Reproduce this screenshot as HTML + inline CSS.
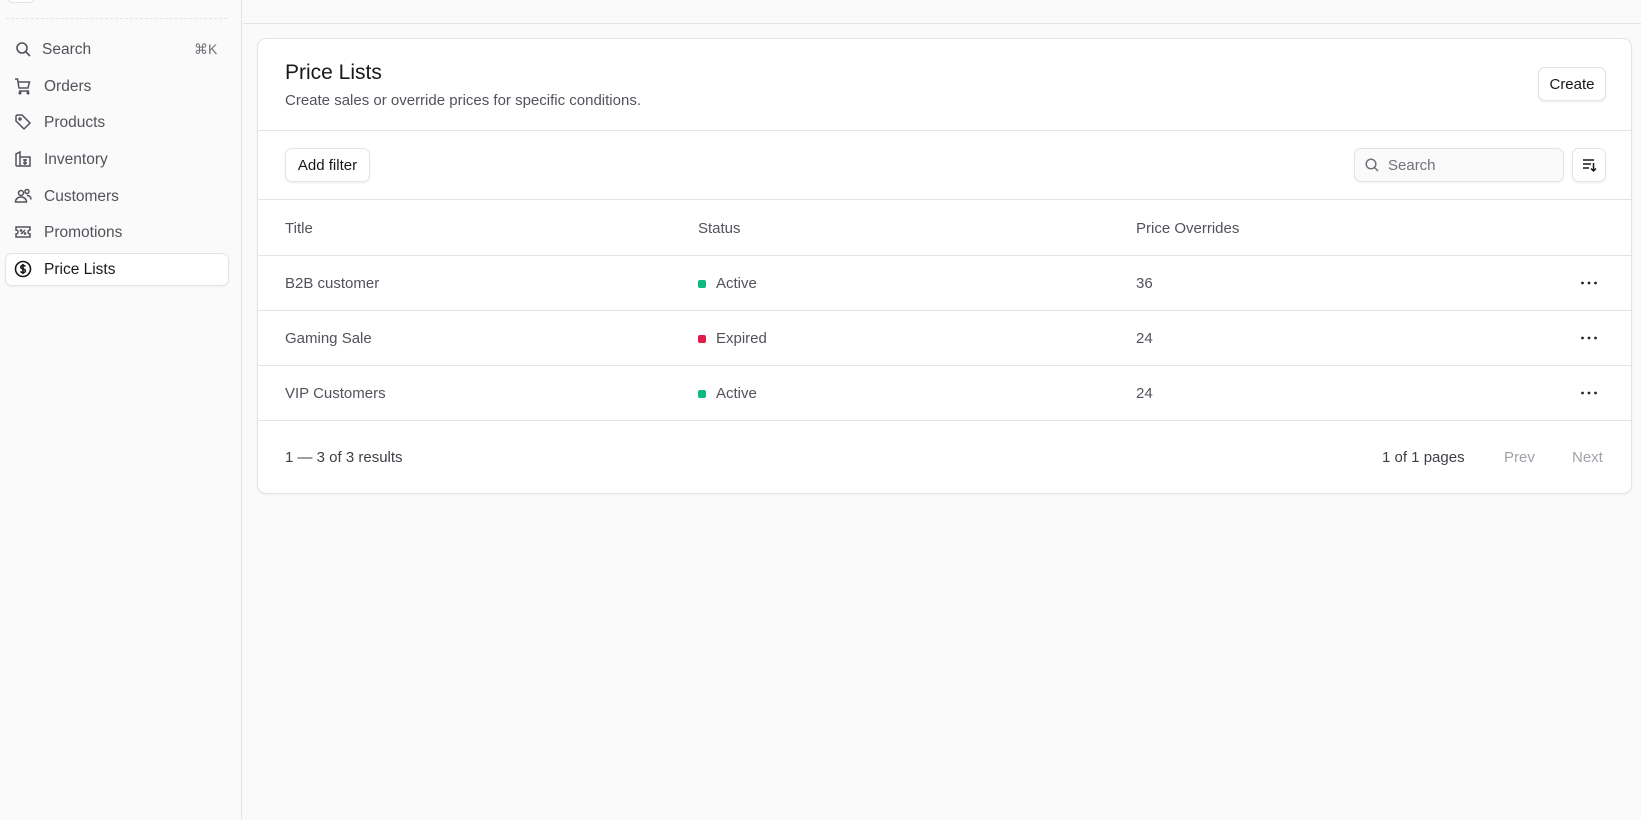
<!DOCTYPE html>
<html><head><style>
*{box-sizing:border-box;margin:0;padding:0}
body{width:1641px;height:820px;background:#fafafa;font-family:"Liberation Sans",sans-serif;color:#18181b;position:relative;overflow:hidden;font-size:15px}
.side{position:absolute;left:0;top:0;width:242px;height:820px;background:#fafafa;border-right:1px solid #e4e4e7}
.dots{position:absolute;left:6px;right:14px;top:18px;border-top:1px dashed #e4e4e7}
.nav{position:absolute;left:5px;width:224px;height:33px;display:flex;align-items:center;color:#52525b;font-size:15.5px}
.nav svg{position:absolute;left:9px;top:7px;width:18px;height:18px}
.nav span{position:absolute;left:39px;top:8px}
.nav.act{background:#fff;border:1px solid #e4e4e7;border-radius:7px;color:#18181b;box-shadow:0 1px 2px rgba(0,0,0,.05)}
.top{position:absolute;left:243px;right:0;top:0;height:24px;border-bottom:1px solid #e4e4e7}
.card{position:absolute;left:257px;top:38px;width:1375px;height:456px;background:#fff;border:1px solid #e4e4e7;border-radius:9px;box-shadow:0 1px 2px rgba(0,0,0,.05)}
.ab{position:absolute}
.btn{position:absolute;background:#fff;border:1px solid #e4e4e7;border-radius:7px;box-shadow:0 1px 2px rgba(0,0,0,.08);display:flex;align-items:center;justify-content:center;font-size:15px;color:#18181b}
.hr{position:absolute;left:0;right:0;border-top:1px solid #e4e4e7}
.row{position:absolute;left:0;right:0;height:20px;color:#52525b;font-size:15px}
.row div{position:absolute;top:0}
.row div.dot{width:8px;height:8px;border-radius:2px;top:5px}
.row div.more{top:5px;line-height:0}
</style></head><body>
<div class="side">
<div style="position:absolute;left:7px;top:-20px;width:28px;height:23px;border:1px solid #e4e4e7;border-radius:6px;background:#fff"></div>
<div class="dots"></div>
<div class="nav" style="top:33px"><svg viewBox="0 0 18 18" fill="none" stroke="#52525b" stroke-width="1.6"><circle cx="8" cy="8" r="5"/><path d="M12 12l4 4"/></svg><span style="left:37px">Search</span><span style="left:189px;color:#71717a;font-size:14px">⌘K</span></div>
<div class="nav" style="top:70px"><svg viewBox="0 0 18 18" fill="none" stroke="#52525b" stroke-width="1.5"><path d="M1 2h2.5l1.5 9h9l1.5-6H4"/><path d="M5 14h10"/><circle cx="6" cy="16" r=".8"/><circle cx="14" cy="16" r=".8"/></svg><span>Orders</span></div>
<div class="nav" style="top:106px"><svg viewBox="0 0 18 18" fill="none" stroke="#52525b" stroke-width="1.5"><path d="M2 3v5l8 8 6-6-8-8H3z"/><circle cx="6" cy="6" r="1"/></svg><span>Products</span></div>
<div class="nav" style="top:143px"><svg viewBox="0 0 18 18" fill="none" stroke="#52525b" stroke-width="1.5"><path d="M2 16V4l4-2v14M6 7h10v9H2M9 10h4M9 13h4M11 9v6"/></svg><span>Inventory</span></div>
<div class="nav" style="top:180px"><svg viewBox="0 0 18 18" fill="none" stroke="#52525b" stroke-width="1.5"><circle cx="7" cy="6" r="2.5"/><circle cx="13" cy="4.5" r="2"/><path d="M1.5 15c0-3 2.5-5 5.5-5s5.5 2 5.5 5zM13 8.5c2.5 0 4 1.5 4 4"/></svg><span>Customers</span></div>
<div class="nav" style="top:216px"><svg viewBox="0 0 18 18" fill="none" stroke="#52525b" stroke-width="1.5"><path d="M2 4h14v3a2 2 0 000 4v3H2v-3a2 2 0 000-4z"/><path d="M7 11l4-4"/><circle cx="7" cy="7.5" r=".6"/><circle cx="11" cy="10.5" r=".6"/></svg><span>Promotions</span></div>
<div class="nav act" style="top:253px"><svg viewBox="0 0 18 18" fill="none" stroke="#18181b" stroke-width="1.6" style="left:8px;top:6px"><circle cx="9" cy="9" r="7.5"/><path d="M11.3 6.5c-.5-.8-1.300-1.1-2.3-1.1-1.3 0-2.2.7-2.2 1.7 0 2.4 4.6 1.2 4.6 3.8 0 1-1 1.8-2.4 1.8-1.1 0-2-.5-2.4-1.3M9 4v10"/></svg><span style="left:38px;top:7px">Price Lists</span></div>
</div>
<div class="top"></div>
<div class="card">
<div class="ab" style="left:27px;top:22px;font-size:21px;color:#18181b">Price Lists</div>
<div class="ab" style="left:27px;top:53px;font-size:15px;color:#52525b">Create sales or override prices for specific conditions.</div>
<div class="btn" style="left:1280px;top:28px;width:68px;height:34px">Create</div>
<div class="hr" style="top:91px"></div>
<div class="btn" style="left:27px;top:109px;width:85px;height:34px">Add filter</div>
<div class="ab" style="left:1096px;top:109px;width:210px;height:34px;background:#fafafa;border:1px solid #e4e4e7;border-radius:7px;box-shadow:0 1px 2px rgba(0,0,0,.05)">
<svg style="position:absolute;left:9px;top:8px" width="16" height="16" viewBox="0 0 16 16" fill="none" stroke="#71717a" stroke-width="1.5"><circle cx="7" cy="7" r="4.8"/><path d="M10.5 10.5l3.5 3.5"/></svg>
<span style="position:absolute;left:33px;top:8px;color:#71717a;font-size:15px">Search</span></div>
<div class="btn" style="left:1314px;top:109px;width:34px;height:34px"><svg width="16" height="16" viewBox="0 0 16 16" fill="none" stroke="#18181b" stroke-width="1.5"><path d="M2 3h11M2 7h8M2 11h6M12.5 6v8M10 11.5l2.5 2.5 2.5-2.5"/></svg></div>
<div class="hr" style="top:160px"></div>
<div class="row" style="top:181px"><div style="left:27px">Title</div><div style="left:440px">Status</div><div style="left:878px">Price Overrides</div></div>
<div class="hr" style="top:216px"></div>
<div class="row" style="top:236px"><div style="left:27px">B2B customer</div><div class="dot" style="left:440px;background:#10b981"></div><div style="left:458px">Active</div><div style="left:878px">36</div><div class="more" style="left:1322px"><svg width="18" height="6" viewBox="0 0 18 6" fill="#27272a"><circle cx="2.5" cy="3" r="1.4"/><circle cx="9" cy="3" r="1.4"/><circle cx="15.5" cy="3" r="1.4"/></svg></div></div>
<div class="hr" style="top:271px"></div>
<div class="row" style="top:291px"><div style="left:27px">Gaming Sale</div><div class="dot" style="left:440px;background:#e11d48"></div><div style="left:458px">Expired</div><div style="left:878px">24</div><div class="more" style="left:1322px"><svg width="18" height="6" viewBox="0 0 18 6" fill="#27272a"><circle cx="2.5" cy="3" r="1.4"/><circle cx="9" cy="3" r="1.4"/><circle cx="15.5" cy="3" r="1.4"/></svg></div></div>
<div class="hr" style="top:326px"></div>
<div class="row" style="top:346px"><div style="left:27px">VIP Customers</div><div class="dot" style="left:440px;background:#10b981"></div><div style="left:458px">Active</div><div style="left:878px">24</div><div class="more" style="left:1322px"><svg width="18" height="6" viewBox="0 0 18 6" fill="#27272a"><circle cx="2.5" cy="3" r="1.4"/><circle cx="9" cy="3" r="1.4"/><circle cx="15.5" cy="3" r="1.4"/></svg></div></div>
<div class="hr" style="top:381px"></div>
<div class="row" style="top:410px;color:#3f3f46"><div style="left:27px">1 — 3 of 3 results</div><div style="left:1124px">1 of 1 pages</div><div style="left:1246px;color:#a1a1aa">Prev</div><div style="left:1314px;color:#a1a1aa">Next</div></div>
</div>
</body></html>
